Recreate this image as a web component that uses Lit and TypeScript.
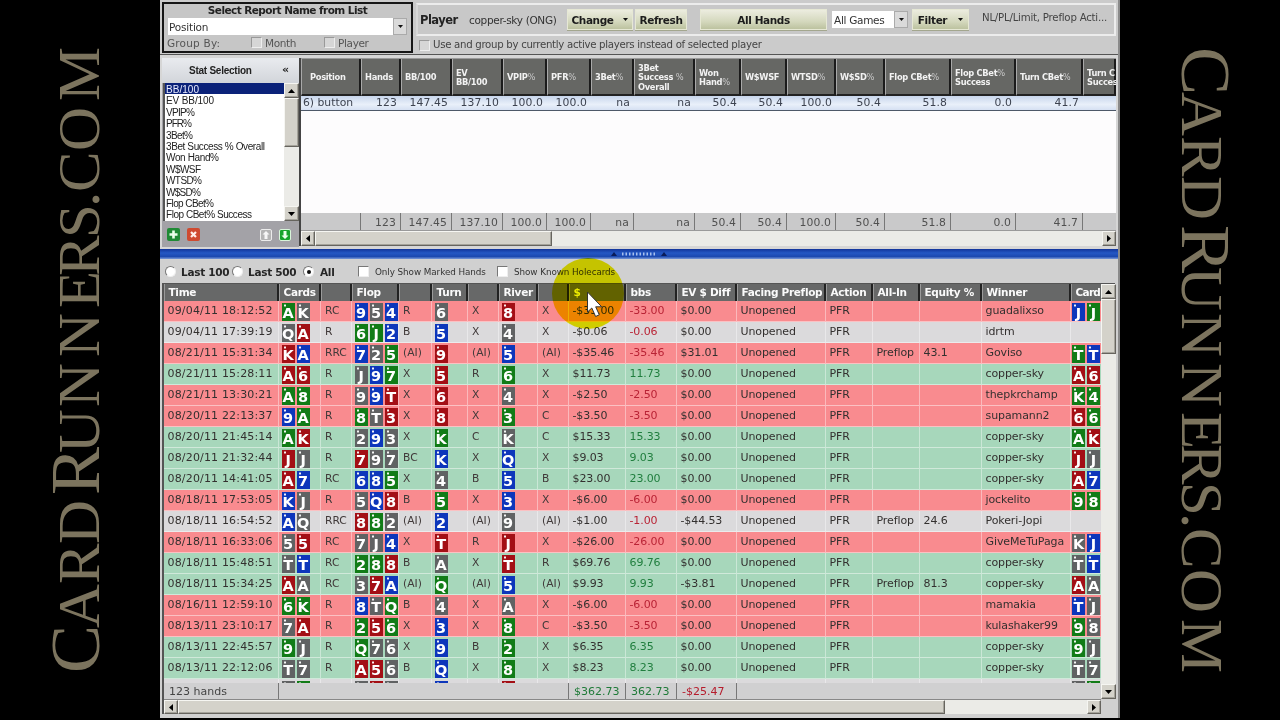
import { LitElement, html, svg, css, nothing } from "lit";
import { customElement, property } from "lit/decorators.js";
import { styleMap } from "lit/directives/style-map.js";

type Tone = "loss" | "win" | "even";

interface Hand {
  tone: Tone;
  cells: string[];
}

/** Suits: g clubs, s spades, b diamonds, r hearts. */
const hand = (tone: Tone, line: string): Hand => ({ tone, cells: line.split("|") });

const HANDS: Hand[] = [
  hand("loss", "09/04/11 18:12:52|Ag Ks|RC|9b 5s 4b|R|6s|X|8r|X|-$33.00|-33.00|$0.00|||guadalixso|Jb Jg"),
  hand("even", "09/04/11 17:39:19|Qs Ar|R|6g Jg 2b|B|5b|X|4s|X|-$0.06|-0.06|$0.00|||idrtm|"),
  hand("loss", "08/21/11 15:31:34|Kr Ab|RRC|7b 2s 5g|(AI)|9r|(AI)|5b|(AI)|-$35.46|-35.46|$31.01|Preflop|43.1|Goviso|Tg Tb"),
  hand("win", "08/21/11 15:28:11|Ar 6r|R|Js 9b 7g|X|5r|R|6g|X|$11.73|11.73|$0.00|||copper-sky|Ar 6r"),
  hand("loss", "08/21/11 13:30:21|Ag 8g|R|9s 9b Tr|X|6r|X|4s|X|-$2.50|-2.50|$0.00|||thepkrchamp|Kg 4g"),
  hand("loss", "08/20/11 22:13:37|9b Ag|R|8g Ts 3r|X|8r|X|3g|C|-$3.50|-3.50|$0.00|||supamann2|6r 6g"),
  hand("win", "08/20/11 21:45:14|Ag Kr|R|2s 9b 3s|X|Kg|C|Ks|C|$15.33|15.33|$0.00|||copper-sky|Ag Kr"),
  hand("win", "08/20/11 21:32:44|Jr Js|R|7r 9s 7s|BC|Kb|X|Qb|X|$9.03|9.03|$0.00|||copper-sky|Jr Js"),
  hand("win", "08/20/11 14:41:05|Ar 7b|RC|6b 8b 5g|X|4s|B|5b|B|$23.00|23.00|$0.00|||copper-sky|Ar 7b"),
  hand("loss", "08/18/11 17:53:05|Kb Js|R|5s Qb 8r|B|5g|X|3b|X|-$6.00|-6.00|$0.00|||jockelito|9g 8g"),
  hand("even", "08/18/11 16:54:52|Ab Qs|RRC|8r 8g 2s|(AI)|2b|(AI)|9s|(AI)|-$1.00|-1.00|-$44.53|Preflop|24.6|Pokeri-Jopi|"),
  hand("loss", "08/18/11 16:33:06|5s 5r|RC|7s Js 4b|X|Tr|R|Jr|X|-$26.00|-26.00|$0.00|||GiveMeTuPaga|Ks Jb"),
  hand("win", "08/18/11 15:48:51|Ts Tb|RC|2g 8g 8r|B|As|X|Tr|R|$69.76|69.76|$0.00|||copper-sky|Ts Tb"),
  hand("win", "08/18/11 15:34:25|Ar As|RC|3s 7r Ab|(AI)|Qg|(AI)|5b|(AI)|$9.93|9.93|-$3.81|Preflop|81.3|copper-sky|Ar As"),
  hand("loss", "08/16/11 12:59:10|6g Kg|R|8b Ts Qg|B|4s|X|As|X|-$6.00|-6.00|$0.00|||mamakia|Tb Js"),
  hand("loss", "08/13/11 23:10:17|7s Ar|R|2g 5r 6g|X|3b|X|8g|C|-$3.50|-3.50|$0.00|||kulashaker99|9g 8s"),
  hand("win", "08/13/11 22:45:57|9g Js|R|Qg 7s 6s|X|9b|B|2g|X|$6.35|6.35|$0.00|||copper-sky|9g Js"),
  hand("win", "08/13/11 22:12:06|Ts 7s|R|Ar 5r 6s|B|Qb|X|8g|X|$8.23|8.23|$0.00|||copper-sky|Ts 7s"),
];

const HAND_HEADS = ["Time", "Cards", "", "Flop", "", "Turn", "", "River", "", "$", "bbs", "EV $ Diff", "Facing Preflop", "Action", "All-In", "Equity %", "Winner", "Card"];
const CARD_COLUMNS = new Set([1, 3, 5, 7, 17]);

const STATS = ["BB/100", "EV BB/100", "VPIP%", "PFR%", "3Bet%", "3Bet Success % Overall", "Won Hand%", "W$WSF", "WTSD%", "W$SD%", "Flop CBet%", "Flop CBet% Success"];
const STAT_WIDTHS = [33, 48, 29, 26, 27, 99, 53, 35, 36, 35, 48, 86];

const REPORT: [string, string][] = [
  ["Position", ""], ["Hands", "123"], ["BB/100", "147.45"], ["EV\nBB/100", "137.10"],
  ["VPIP%", "100.0"], ["PFR%", "100.0"], ["3Bet%", "na"], ["3Bet\nSuccess %\nOverall", "na"],
  ["Won\nHand%", "50.4"], ["W$WSF", "50.4"], ["WTSD%", "100.0"], ["W$SD%", "50.4"],
  ["Flop CBet%", "51.8"], ["Flop CBet%\nSuccess", "0.0"], ["Turn CBet%", "41.7"], ["Turn C\nSucces", ""],
];

const scrollbarStyles = css`
  .sb { display: flex; background: #ebebe7; flex: none; }
  .sb.v { flex-direction: column; width: 15px; }
  .btn, .thumb {
    box-sizing: border-box; background: #d4d2ca; border: 1px solid; flex: none;
    border-color: #f6f6f2 #66645e #66645e #f6f6f2;
    box-shadow: inset -1px -1px 0 #a5a39b;
  }
  .btn { width: 15px; height: 15px; display: grid; place-items: center; }
  .btn svg { display: block; fill: #000; }
  .gap { flex: 1; }
`;

@customElement("scroll-bar")
class ScrollBar extends LitElement {
  @property() dir: "v" | "h" = "v";
  @property({ type: Number }) size = 50;

  static styles = [scrollbarStyles, css`
    :host { display: flex; }
    .sb { flex: 1; }
    .sb.h .btn { height: auto; width: 14px; }
  `];

  render() {
    const v = this.dir === "v";
    const back = v ? "M0 4L3.5 0L7 4Z" : "M4 0L0 3.5L4 7Z";
    const fwd = v ? "M0 0L3.5 4L7 0Z" : "M0 0L4 3.5L0 7Z";
    const w = v ? 7 : 4;
    const h = v ? 4 : 7;
    return html`<div class="sb ${this.dir}">
      <div class="btn"><svg width=${w} height=${h}><path d=${back} /></svg></div>
      <div class="thumb" style=${styleMap({ [v ? "height" : "width"]: `${this.size}px` })}></div>
      <div class="gap"></div>
      <div class="btn"><svg width=${w} height=${h}><path d=${fwd} /></svg></div>
    </div>`;
  }
}

@customElement("play-card")
class PlayCard extends LitElement {
  @property() code = "";

  static styles = css`
    :host { display: block; flex: none; }
    .card {
      box-sizing: border-box; width: 13px; height: 18px; padding-top: 3px; color: #fff; text-align: center;
      font: bold 14.5px/15px "DejaVu Sans", sans-serif;
      background-image: radial-gradient(circle at 3px 2.5px, #fffffff0 0.7px, #ffffff00 1.5px);
    }
    .g { background-color: #117c17; }
    .s { background-color: #606263; }
    .b { background-color: #0d36bb; }
    .r { background-color: #a30f15; }
  `;

  render() {
    return html`<div class="card ${this.code[1]}">${this.code[0].trim()}</div>`;
  }
}

@customElement("side-brand")
class SideBrand extends LitElement {
  @property() side: "left" | "right" = "left";

  static styles = css`
    :host { display: block; width: 160px; height: 720px; background: #000; flex: none; }
    svg { display: block; }
    text { font-family: "Liberation Serif", serif; fill: #7c745e; font-size: 59px; }
    .big { font-size: 70px; }
  `;

  render() {
    const turn = this.side === "left" ? "translate(98.5 671) rotate(-90) scale(1.03 1)" : "translate(62 49) rotate(90) scale(1.03 1)";
    const starts = [-2, 43, 87, 127, 176, 218, 264, 314, 363, 395, 433, 464, 479, 520, 570];
    const xs = starts.map((x) => (x / 1.03).toFixed(1)).join(" ");
    return html`<svg width="160" height="720">
      ${svg`<g transform=${turn}>
        <text x=${xs}><tspan class="big">C</tspan><tspan>ARD</tspan><tspan class="big">R</tspan><tspan>UNNERS.COM</tspan></text>
      </g>`}
    </svg>`;
  }
}

@customElement("report-toolbar")
class ReportToolbar extends LitElement {
  static styles = css`
    :host { display: flex; height: 55px; box-sizing: border-box; padding: 2px 2px 0; background: #cbcbcb; color: #333; border-bottom: 1px solid #555; font: 10.5px/14px "DejaVu Sans", sans-serif; white-space: nowrap; }
    .group { box-sizing: border-box; width: 251px; height: 51px; border: 2px solid #161616; padding: 0 4px; display: flex; flex-direction: column; background: #c6c6c6; }
    .title { font-weight: bold; font-size: 10.5px; color: #222; text-align: center; line-height: 13px; letter-spacing: -0.55px; height: 14px; }
    .select { display: flex; background: #fff; height: 17px; align-items: center; justify-content: space-between; padding-left: 1px; font-size: 10.5px; letter-spacing: -0.2px; color: #333; }
    .drop { width: 12px; height: 15px; margin-right: 1px; background: #dadada; box-shadow: 0 0 0 1px #aaa; display: grid; place-items: center; }
    .drop svg, .tri { display: block; fill: #111; }
    .by { display: flex; align-items: center; height: 15px; font-size: 10.5px; color: #555; }
    .by .label { width: 84px; letter-spacing: 0.2px; margin-left: -1px; }
    .by .opt { width: 73px; display: flex; gap: 3px; align-items: center; letter-spacing: -0.35px; }
    .box { width: 9px; height: 9px; background: #d6d6d6; border: 1px solid; border-color: #999 #eee #eee #999; flex: none; }
    .right { margin-left: 3px; flex: 1; display: flex; flex-direction: column; }
    .bar { display: flex; align-items: center; box-sizing: border-box; height: 33px; margin-top: 1px; border: 2px solid #ececec; border-left-color: #d8d8d8; background: #c8c8c8; padding-left: 2px; }
    .bar .name { font-weight: bold; font-size: 11.5px; width: 49px; color: #222; letter-spacing: -0.5px; }
    .bar .who { width: 98px; letter-spacing: -0.32px; }
    .button { box-sizing: border-box; height: 21px; display: flex; align-items: center; justify-content: center; background: linear-gradient(#eeeee2, #d4d8bd 60%, #b9bf9b); box-shadow: inset 0 0 0 1px #e6e8d4, 0 1px 0 #a3a68e; font-weight: bold; font-size: 10.5px; color: #1c1c1c; letter-spacing: -0.4px; }
    .change { width: 66px; gap: 10px; margin-right: 2px; }
    .refresh { width: 52px; }
    .all { width: 127px; margin-left: 13px; letter-spacing: -0.4px; }
    .games { width: 76px; margin: 0 4px 0 5px; padding-left: 2px; box-sizing: border-box; letter-spacing: -0.3px; }
    .filter { width: 57px; gap: 11px; }
    .summary { margin: -4px 0 0 13px; font-size: 10.2px; letter-spacing: -0.22px; color: #444; }
    .active { display: flex; align-items: center; gap: 3px; height: 18px; padding-left: 3px; font-size: 10.2px; letter-spacing: -0.3px; color: #444; }
  `;

  render() {
    const tri = html`<svg class="tri" width="5" height="3"><path d="M0 0H5L2.5 3Z" /></svg>`;
    return html`
      <div class="group">
        <div class="title">Select Report Name from List</div>
        <div class="select">Position<span class="drop">${tri}</span></div>
        <div class="by"><span class="label">Group By:</span><span class="opt"><i class="box"></i>Month</span><span class="opt"><i class="box"></i>Player</span></div>
      </div>
      <div class="right">
        <div class="bar">
          <span class="name">Player</span><span class="who">copper-sky (ONG)</span>
          <span class="button change">Change ${tri}</span><span class="button refresh">Refresh</span>
          <span class="button all">All Hands</span>
          <span class="select games">All Games<span class="drop">${tri}</span></span>
          <span class="button filter">Filter ${tri}</span>
          <span class="summary">NL/PL/Limit, Preflop Acti...</span>
        </div>
        <div class="active"><i class="box"></i>Use and group by currently active players instead of selected player</div>
      </div>`;
  }
}

@customElement("stat-picker")
class StatPicker extends LitElement {
  static styles = css`
    :host { display: flex; flex-direction: column; width: 137px; height: 189px; background: #a3a2a7; flex: none; }
    .head { display: flex; justify-content: space-between; align-items: center; height: 25px; padding: 0 10px 0 27px; background: linear-gradient(#e9ebef, #d2d5da); font: bold 10px/24px "Liberation Sans", sans-serif; color: #222; }
    .head b { letter-spacing: -0.25px; }
    .head i { font: bold 11px/20px "DejaVu Sans", sans-serif; padding-bottom: 2px; }
    .list { display: flex; height: 138px; background: #fff; border-left: 2px solid #555; margin-left: 1px; }
    .items { flex: 1; display: flex; flex-direction: column; overflow: hidden; }
    .item { height: 11.4px; flex: none; }
    .item svg { display: block; overflow: visible; font: 10px "Liberation Sans", sans-serif; }
    .item text { fill: #222; }
    .item.on { background: #0b2279; }
    .item.on text { fill: #e9ecff; }
    .tools { flex: 1; display: flex; align-items: center; gap: 7px; padding: 1px 8px 0 5px; }
    .tools svg { display: block; }
    .push { margin-left: auto; }
  `;

  render() {
    return html`
      <div class="head"><b>Stat Selection</b><i>«</i></div>
      <div class="list">
        <div class="items">
          ${STATS.map((s, i) => html`<div class="item ${i === 0 ? "on" : ""}"><svg width="110" height="11"><text x="1" y="9.5" textLength=${STAT_WIDTHS[i]}>${s}</text></svg></div>`)}
        </div>
        <scroll-bar dir="v" size="49"></scroll-bar>
      </div>
      <div class="tools">
        <svg width="13" height="13"><rect width="13" height="13" rx="2" fill="#1f8a35" /><path d="M6.5 2.5V10.5M2.5 6.5H10.5" stroke="#eaffea" stroke-width="2.6" /></svg>
        <svg width="13" height="13"><rect width="13" height="13" rx="2" fill="#cf4a30" /><path d="M4 4L9 9M9 4L4 9" stroke="#ffeee8" stroke-width="2.2" /></svg>
        <svg class="push" width="12" height="12"><rect x=".5" y=".5" width="11" height="11" rx="1.5" fill="#b4b4b4" stroke="#ececec" /><path d="M6 2L9.5 5.5H7.5V10H4.5V5.5H2.5Z" fill="#f6f6f6" /></svg>
        <svg width="12" height="12"><rect x=".5" y=".5" width="11" height="11" rx="1.5" fill="#17a42b" stroke="#d8f5da" /><path d="M6 10L2.5 6.5H4.5V2H7.5V6.5H9.5Z" fill="#eaffea" /></svg>
      </div>`;
  }
}

@customElement("report-table")
class ReportTable extends LitElement {
  static styles = css`
    :host { display: flex; flex-direction: column; height: 188px; width: 817px; box-sizing: border-box; border-left: 2px solid #444; background: #fdfcfd; font: 10.8px/15px "DejaVu Sans", sans-serif; color: #3d4350; }
    .row { display: grid; grid-template-columns: 60px 40px 51px 51px 44px 44px 43px 61px 46px 46px 49px 49px 66px 65px 67px 33px; overflow: hidden; flex: none; }
    .head { height: 38px; background: #666764; border-top: 1px solid #999; box-sizing: border-box; color: #f2f2f2; font: bold 8.3px/9.3px "DejaVu Sans", sans-serif; }
    .head > div { display: flex; align-items: center; padding: 3px 0 0 3px; white-space: pre; border-right: 2px solid #1b1b1b; border-left: 1px solid #a9a9a9; letter-spacing: -0.3px; border-bottom: 2px solid #222; }
    .head > div:first-child { padding-left: 8px; }
    .head .pc { color: #c9c9c9; font-weight: normal; }
    .data { height: 14px; background: linear-gradient(#c8d6ec, #e9f0fa 60%, #d5e0f2); border-bottom: 1px solid #4d5868; line-height: 14px; }
    .data > div, .foot > div { text-align: right; padding-right: 4px; white-space: nowrap; overflow: hidden; letter-spacing: 0.1px; }
    .data > div:first-child { text-align: left; padding-left: 2px; letter-spacing: 0; }
    .space { flex: 1; }
    .foot { height: 17px; background: #c9c9ca; border-bottom: 1px solid #9a9a9a; line-height: 19px; color: #505050; }
    .foot > div { border-right: 1px solid #777; }
    .foot > div:last-child { border: 0; }
    scroll-bar { height: 15px; }
  `;

  render() {
    return html`
      <div class="row head">${REPORT.map(([h]) => html`<div><span>${h.split(/(%)/).map((p) => (p === "%" ? html`<span class="pc">%</span>` : p))}</span></div>`)}</div>
      <div class="row data">${REPORT.map(([, v], i) => html`<div>${i ? v : "6) button"}</div>`)}</div>
      <div class="space"></div>
      <div class="row foot">${REPORT.map(([, v]) => html`<div>${v}</div>`)}</div>
      <scroll-bar dir="h" size="237"></scroll-bar>`;
  }
}

@customElement("hand-table")
class HandTable extends LitElement {
  static styles = css`
    :host { display: flex; flex-direction: column; height: 431px; margin: 0 3px 0 2px; border-left: 2px solid #555; border-top: 1px solid #555; box-sizing: border-box; font: 11px/20px "DejaVu Sans", sans-serif; color: #33302f; }
    .main { display: flex; height: 415px; flex: none; }
    .grid { width: 937px; flex: none; display: flex; flex-direction: column; overflow: hidden; background: #dcdbdd; }
    .row { display: grid; grid-template-columns: 115px 42px 31px 47px 33px 36px 31px 39px 31px 57px 51px 60px 89px 47px 47px 62px 89px 30px; flex: none; white-space: nowrap; }
    .head { height: 17px; background: #676868; color: #fafafa; font: bold 10.5px/17px "DejaVu Sans", sans-serif; }
    .head > div { box-sizing: border-box; padding-left: 3.5px; border-right: 2px solid #222; border-left: 1px solid #9a9a9a; letter-spacing: -0.3px; }
    .head > div:last-child { border-right: 0; letter-spacing: -0.7px; }
    .rows { height: 382px; overflow: hidden; flex: none; }
    .hand { height: 21px; }
    .hand > div { box-sizing: border-box; border-right: 1px solid #ffffff66; border-bottom: 1px solid #ffffff77; padding-left: 3.5px; height: 21px; letter-spacing: -0.1px; }
    .loss { background: #f98b8f; }
    .win { background: #a7d7bb; }
    .even { background: #dbdadc; }
    .hand > .time { letter-spacing: 0.17px; }
    .hand > .cards { display: flex; gap: 2px; padding: 2px 0 0 2.6px; }
    .hand > div.cards:last-child { padding-left: 1px; border-right: 0; }
    .hand > .act { font-size: 10.7px; padding-left: 4px; color: #413a3a; letter-spacing: 0; }
    .neg { color: #b92335; }
    .pos { color: #207e3e; }
    .foot { height: 17px; line-height: 17px; background: #d0d0d1; color: #444; }
    .foot > div { box-sizing: border-box; padding-left: 5px; letter-spacing: 0; }
    .foot .edge { border-right: 1px solid #777; }
    .foot > .neg { color: #b51b2c; }
    .foot > .pos { color: #1f7a38; }
    scroll-bar[dir="h"] { height: 15px; margin-right: 14px; border-top: 1px solid #888; }
  `;

  private cards(codes: string) {
    return codes ? codes.split(" ").map((c) => html`<play-card code=${c}></play-card>`) : nothing;
  }

  private cellClass(i: number, text: string) {
    if (CARD_COLUMNS.has(i)) return "cards";
    if (i === 0) return "time";
    if (i === 10) return text.startsWith("-") ? "neg" : "pos";
    return i < 9 ? "act" : "";
  }

  private row(h: Hand) {
    const c = [...h.cells.slice(0, 12), "Unopened", "PFR", ...h.cells.slice(12)];
    return html`<div class="row hand ${h.tone}">${c.map((t, i) => {
      const cls = this.cellClass(i, t);
      return html`<div class=${cls}>${cls === "cards" ? this.cards(t) : t}</div>`;
    })}</div>`;
  }

  render() {
    const foot = HAND_HEADS.map((_, i) => ({ 0: "123 hands", 9: "$362.73", 10: "362.73", 11: "-$25.47" } as Record<number, string>)[i] ?? "");
    const partial: Record<number, string> = { 1: "sg", 3: "srs", 5: "b", 7: "r", 17: "sg" };
    return html`
      <div class="main">
        <div class="grid">
          <div class="row head">${HAND_HEADS.map((t) => html`<div>${t}</div>`)}</div>
          <div class="rows">
            ${HANDS.map((h) => this.row(h))}
            <div class="row hand even">${HAND_HEADS.map((_, i) => {
              const suits = partial[i];
              return html`<div class=${suits ? "cards" : ""}>${suits ? [...suits].map((s) => html`<play-card code=${" " + s}></play-card>`) : nothing}</div>`;
            })}</div>
          </div>
          <div class="row foot">${foot.map((t, i) => html`<div class="${[0, 8, 9, 10, 11].includes(i) ? "edge" : ""} ${i === 11 ? "neg" : i > 8 ? "pos" : ""}">${t}</div>`)}</div>
        </div>
        <scroll-bar dir="v" size="55"></scroll-bar>
      </div>
      <scroll-bar dir="h" size="767"></scroll-bar>`;
  }
}

@customElement("app-root")
class AppRoot extends LitElement {
  static styles = css`
    :host { display: block; width: 1280px; height: 720px; background: #000; overflow: hidden; position: relative; }
    .page { display: flex; height: 720px; }
    .window { width: 960px; height: 718px; box-sizing: border-box; background: #d0d0d0; border-right: 2px solid #8a8a8a; display: flex; flex-direction: column; overflow: hidden; }
    .upper { display: flex; height: 194px; padding: 3px 0 0 2px; box-sizing: border-box; background: #d6d6d6; flex: none; }
    .splitter { height: 10px; background: linear-gradient(#12349a, #2457c4 40%, #1c49b0 75%, #7c9ad8); display: flex; justify-content: center; align-items: center; flex: none; }
    .splitter svg { display: block; }
    .filters { display: flex; align-items: center; height: 24px; padding-left: 5px; font: bold 10.5px/24px "DejaVu Sans", sans-serif; color: #262626; flex: none; white-space: nowrap; padding-top: 1px; box-sizing: border-box; }
    .radio { width: 9px; height: 9px; border-radius: 50%; background: #fff; border: 1px solid; border-color: #777 #eee #eee #777; box-sizing: content-box; display: grid; place-items: center; flex: none; }
    .radio.on::after { content: ""; width: 4px; height: 4px; border-radius: 50%; background: #111; }
    .opt { display: flex; align-items: center; gap: 5px; letter-spacing: -0.3px; }
    .o1 { width: 67px; }
    .o2 { width: 71px; }
    .o3 { width: 55px; gap: 6px; }
    .check { font-weight: normal; font-size: 8.8px; gap: 6px; letter-spacing: -0.07px; color: #333; }
    .check i { width: 9px; height: 9px; background: #fff; border: 1px solid; border-color: #777 #eee #eee #777; flex: none; }
    .c1 { width: 139px; }
    .glow { position: absolute; left: 552px; top: 258px; width: 72px; height: 71px; border-radius: 50%; background: #f2f000; mix-blend-mode: multiply; }
    .cursor { position: absolute; left: 585px; top: 290px; }
  `;

  render() {
    return html`
      <div class="page">
        <side-brand side="left"></side-brand>
        <div class="window">
          <report-toolbar></report-toolbar>
          <div class="upper"><stat-picker></stat-picker><report-table></report-table></div>
          <div class="splitter">
            <svg width="56" height="6"><path d="M0 5L3 1L6 5ZM50 5L53 1L56 5Z" fill="#0a1c58" /><path d="M11 3H44" stroke="#a8c0ee" stroke-width="3" stroke-dasharray="1.5 2" /></svg>
          </div>
          <div class="filters">
            <span class="opt o1"><i class="radio"></i>Last 100</span>
            <span class="opt o2"><i class="radio"></i>Last 500</span>
            <span class="opt o3"><i class="radio on"></i>All</span>
            <span class="opt check c1"><i></i>Only Show Marked Hands</span>
            <span class="opt check"><i></i>Show Known Holecards</span>
          </div>
          <hand-table></hand-table>
        </div>
        <side-brand side="right"></side-brand>
      </div>
      <div class="glow"></div>
      <svg class="cursor" width="20" height="29"><path d="M2.5 2V22L6.8 18L10.6 26.5L14.3 24.8L10.7 16.8H16.7Z" fill="#fff" stroke="#333" stroke-width="1" /></svg>`;
  }
}
